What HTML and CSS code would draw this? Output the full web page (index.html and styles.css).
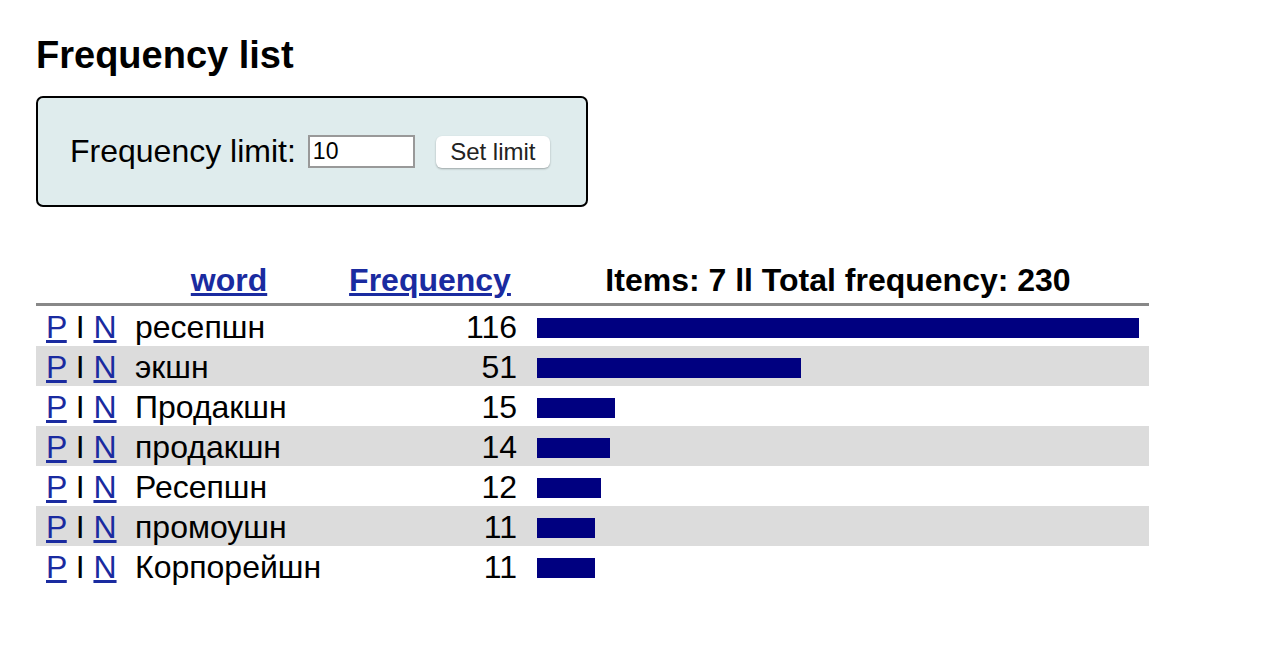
FILE: index.html
```html
<!DOCTYPE html>
<html lang="ru">
<head>
<meta charset="utf-8">
<title>Frequency list</title>
<link rel="stylesheet" href="styles.css">
</head>
<body>
<h1 class="title">Frequency list</h1>
<form class="limitbox" onsubmit="return false">
	<label class="limitlabel">Frequency limit:<input type="text" class="limitinput" value="10"></label>
	<button class="limitbutton">Set limit</button>
</form>
<table class="freqtable">
	<colgroup>
		<col class="c-links">
		<col class="c-word">
		<col class="c-freq">
		<col class="c-bar">
	</colgroup>
	<thead>
		<tr>
			<th></th>
			<th><a href="#">word</a></th>
			<th><a href="#">Frequency</a></th>
			<th>Items: 7 ll Total frequency: 230</th>
		</tr>
	</thead>
	<tbody>
		<tr>
			<td><a href="#">P</a> I <a href="#">N</a></td>
			<td>ресепшн</td>
			<td class="num">116</td>
			<td><div class="bar" style="width:602px"></div></td>
		</tr>
		<tr>
			<td><a href="#">P</a> I <a href="#">N</a></td>
			<td>экшн</td>
			<td class="num">51</td>
			<td><div class="bar" style="width:264px"></div></td>
		</tr>
		<tr>
			<td><a href="#">P</a> I <a href="#">N</a></td>
			<td>Продакшн</td>
			<td class="num">15</td>
			<td><div class="bar" style="width:78px"></div></td>
		</tr>
		<tr>
			<td><a href="#">P</a> I <a href="#">N</a></td>
			<td>продакшн</td>
			<td class="num">14</td>
			<td><div class="bar" style="width:73px"></div></td>
		</tr>
		<tr>
			<td><a href="#">P</a> I <a href="#">N</a></td>
			<td>Ресепшн</td>
			<td class="num">12</td>
			<td><div class="bar" style="width:64px"></div></td>
		</tr>
		<tr>
			<td><a href="#">P</a> I <a href="#">N</a></td>
			<td>промоушн</td>
			<td class="num">11</td>
			<td><div class="bar" style="width:58px"></div></td>
		</tr>
		<tr>
			<td><a href="#">P</a> I <a href="#">N</a></td>
			<td>Корпорейшн</td>
			<td class="num">11</td>
			<td><div class="bar" style="width:58px"></div></td>
		</tr>
	</tbody>
</table>
</body>
</html>
```

FILE: styles.css
```css
* {
	margin: 0;
	padding: 0;
	}
body{
	padding:0 36px;
	font-family:"Liberation Sans", Arial, sans-serif;
	font-size:32px;
	color:#000;
	background:#fff;
	}
a{
	color:#1a2ba0;
	}
h1.title{
	font-size:38px;
	line-height:44px;
	margin-top:33px;
	}
.limitbox{
	width:552px;
	height:111px;
	box-sizing:border-box;
	margin-top:19px;
	padding:0 32px;
	border:2px solid #000;
	border-radius:7px;
	background-color:#dfeced;
	display:flex;
	align-items:center;
	}
.limitlabel{
	display:flex;
	align-items:center;
	}
.limitinput{
	width:107px;
	height:33px;
	box-sizing:border-box;
	margin-left:12px;
	padding:0 3px;
	border:2px solid #999;
	font-family:"Liberation Sans", Arial, sans-serif;
	font-size:23px;
	color:#000;
	}
.limitbutton{
	width:114px;
	height:32px;
	margin-left:21px;
	border:none;
	border-radius:6px;
	background:#fff;
	box-shadow:0 1px 2px rgba(0,0,0,0.3);
	font-family:"Liberation Sans", Arial, sans-serif;
	font-size:24px;
	color:#222;
	}
.freqtable{
	width:1113px;
	margin-top:51px;
	table-layout:fixed;
	border-collapse:collapse;
	}
.c-links{width:89px;}
.c-word{width:208px;}
.c-freq{width:194px;}
.c-bar{width:622px;}
.freqtable th{
	height:45px;
	font-size:32px;
	border-bottom:3px solid #888;
	white-space:nowrap;
	}
.freqtable td{
	height:40px;
	box-sizing:border-box;
	padding:3px 10px 0;
	white-space:nowrap;
	}
.freqtable tbody tr:nth-child(even){
	background-color:#dcdcdc;
	}
.num{
	text-align:right;
	}
.bar{
	height:20px;
	margin-top:0;
	background-color:#000080;
	}
```
